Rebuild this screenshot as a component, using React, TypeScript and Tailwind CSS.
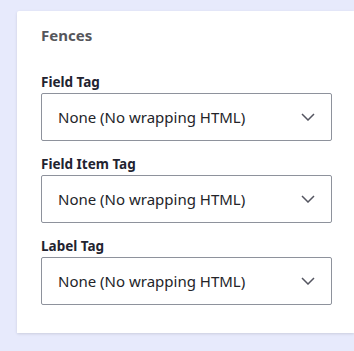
const fields = ['Field Tag', 'Field Item Tag', 'Label Tag']

export default function App() {
  return (
    <div className="h-[351px] w-[354px] overflow-hidden bg-[#e7eafc] pl-[17px] pt-[11px] font-['Noto_Sans',sans-serif]">
      <div className="h-[322px] rounded-tl-[2px] bg-white pl-[24px] pr-[22px] pt-[13px] shadow-[0_1px_3px_rgba(0,0,0,0.12)]">
        <h2 className="text-[15px] font-bold leading-[22px] text-[#55565b]">Fences</h2>
        <div className="mt-[26px] flex flex-col gap-[13px]">
          {fields.map((label) => (
            <div key={label}>
              <label className="block text-[13.5px] font-bold leading-[20px] text-[#222330]">{label}</label>
              <div className="mt-[1px] flex h-[48px] items-center justify-between rounded-[2px] border border-[#8e929c] pl-[16px] pr-[16px]">
                <span className="text-[15px] leading-[22px] text-[#232429]">None (No wrapping HTML)</span>
                <svg width="14" height="8" viewBox="0 0 14 8" fill="none" className="text-[#545560]">
                  <path d="M1 1l6 6 6-6" stroke="currentColor" strokeWidth="1.5" />
                </svg>
              </div>
            </div>
          ))}
        </div>
      </div>
    </div>
  )
}
